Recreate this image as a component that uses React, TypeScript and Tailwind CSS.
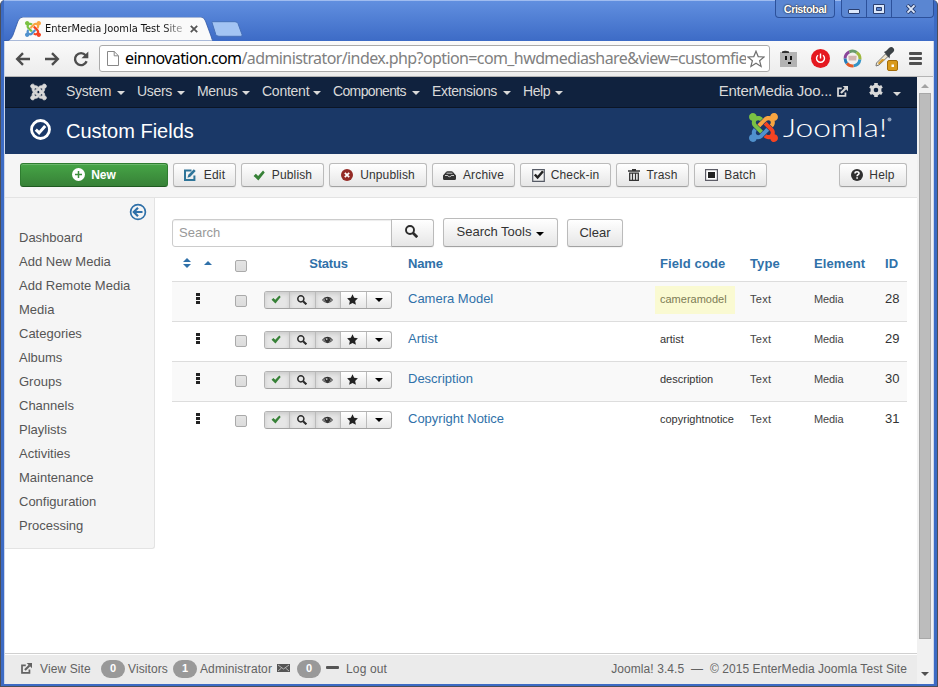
import type { ReactNode } from "react";
import { FaJoomla } from "react-icons/fa";

type Box = { className?: string };

const joomlaPieces = [
  {
    color: "#7ac143",
    d: "M.6 92.1C.6 58.8 27.4 32 60.4 32c30 0 54.5 21.9 59.2 50.2 32.6-7.6 67.1.6 96.5 30l-44.3 44.3c-20.5-20.5-42.6-16.3-55.4-3.5-14.3 14.3-14.3 37.9 0 52.2l99.5 99.5-44 44.3c-87.7-87.2-49.7-49.7-99.8-99.7-26.8-26.5-35-64.8-24.8-98.9C20.4 144.6.6 120.7.6 92.1z",
  },
  {
    color: "#f9a541",
    d: "M130.1 208.5l44.3 44.3c10-10 89.7-89.7 99.7-99.8 14.3-14.3 37.6-14.3 51.9 0 12.8 12.8 17 35-3.5 55.4l44 44.3c31.2-31.2 38.5-67.6 28.9-101.2 29.2-4.1 51.9-29.2 51.9-59.5 0-33.2-26.8-60.1-59.8-60.1-30.3 0-55.4 22.5-59.5 51.6-33.8-9.9-71.7-1.5-98.3 25.1-18.3 19.1-71.1 71.5-99.6 99.9z",
  },
  {
    color: "#f44321",
    d: "M396.4 360.7c8.2-32.7-.9-68.5-26.3-93.9-11.8-12.2 5 4.7-99.5-99.7l-44.3 44.3 99.7 99.7c14.3 14.3 14.3 37.6 0 51.9-12.8 12.8-35 17-55.4-3.5l-44 44.3c27.6 30.2 68 38.8 102.7 28 5.5 27.4 29.7 48.1 58.9 48.1 33 0 59.8-26.8 59.8-60.1 0-30.2-22.5-55-51.6-59.1z",
  },
  {
    color: "#5091cd",
    d: "M312.1 307.6l-44-44.3c-87 86.4-50.4 50.4-99.7 99.8-14.3 14.3-37.6 14.3-51.9 0-13.1-13.4-16.9-35.3 3.2-55.4l-44-44.3c-30.2 30.2-38 65.2-29.5 98.3-26.7 6-46.2 29.9-46.2 58.2C0 453.2 26.8 480 59.8 480c28.6 0 52.5-19.8 58.6-46.7 32.7 8.2 68.5-.6 94.2-26 32.1-32 12.2-12.4 99.5-99.7z",
  },
];

function JoomlaMark({ className }: Box) {
  return (
    <svg viewBox="0 32 448 448" className={className}>
      {joomlaPieces.map((p) => (
        <path key={p.color} d={p.d} fill={p.color} />
      ))}
    </svg>
  );
}

function Caret({ className = "" }: Box) {
  return <span className={`inline-block h-0 w-0 border-x-4 border-t-4 border-x-transparent ${className}`} />;
}

function CheckIcon({ className }: Box) {
  return (
    <svg viewBox="0 0 12 11.500" className={className}>
      <path d="M.3 6.200 2.700 3.800l2.400 2.400L10.200.6l1.800 2L5.300 11z" fill="#378137" />
    </svg>
  );
}

function SearchIcon({ className }: Box) {
  return (
    <svg viewBox="0 0 13 13" className={className} fill="none" stroke="#2b2b2b">
      <circle cx="5" cy="5" r="4" strokeWidth="1.9" />
      <path d="m8 8 4.200 4.200" strokeWidth="2.700" />
    </svg>
  );
}

function OutIcon({ className }: Box) {
  return (
    <svg viewBox="0 0 12 12" className={className} fill="none" stroke="currentColor" strokeWidth="1.9">
      <path d="M5.200 2.600H1.100v8.300H9.200V7" />
      <path d="m4.300 7.600 5-5" strokeWidth="2.300" />
      <path d="M6.200 0h5.800v5.800z" fill="currentColor" stroke="none" />
    </svg>
  );
}

const actionIcons: Record<string, ReactNode> = {
  Edit: (
    <svg viewBox="0 0 12 12" className="mr-[8px] h-3 w-3" fill="none" stroke="#2f7599">
      <path d="M7.500 1.600H1v9.400h9.400V6.500" strokeWidth="2" />
      <path d="M3.500 8.700 4.300 5.800 9.800.3l1.900 1.800L6.300 7.800z" fill="#2f7599" stroke="none" />
    </svg>
  ),
  Publish: <CheckIcon className="mr-[7px] h-[11px] w-[12px]" />,
  Unpublish: (
    <svg viewBox="0 0 12 12" className="mr-[7px] h-3 w-3">
      <circle cx="6" cy="6" r="6" fill="#942a25" />
      <path d="m3.800 3.800 4.400 4.400m0-4.400L3.800 8.200" stroke="#fff" strokeWidth="1.700" />
    </svg>
  ),
  Archive: (
    <svg viewBox="0 0 13 9" className="mr-[7px] h-[9px] w-[13px]">
      <path d="M0 4.500 3 1Q3.600.2 4.500.2h4Q9.400.2 10 1l3 3.500V7.500Q13 9 11.600 9H1.400Q0 9 0 7.500z" fill="#333" />
      <path d="M3.500 2.200h6M2 4.500h2.800q.2 1.200 1.700 1.200t1.700-1.200H11" fill="none" stroke="#ddd" strokeWidth=".9" />
    </svg>
  ),
  "Check-in": (
    <svg viewBox="0 0 13 13" className="mr-[6px] h-[13px] w-[13px]" fill="none">
      <path d="M.7.7h11.600v11.600H.7z" stroke="#565b66" strokeWidth="1.200" />
      <path d="m2.800 5.500 2.800 3L11 2.300" stroke="#222" strokeWidth="2.500" />
    </svg>
  ),
  Trash: (
    <svg viewBox="0 0 12 12" className="mr-[7px] h-3 w-3" fill="none" stroke="#333">
      <path d="M0 2h12M4 .7h4" strokeWidth="1.400" />
      <path d="M1.700 4.200h8.600v7.100H1.700z" strokeWidth="1.300" />
      <path d="M4.500 4v7M7.500 4v7" strokeWidth="1.200" />
    </svg>
  ),
  Batch: (
    <svg viewBox="0 0 13 12" className="mr-[6px] h-3 w-[13px]">
      <path d="M.6.6h11.800v10.800H.6z" fill="#fff" stroke="#5c5c66" strokeWidth="1.200" />
      <path d="M3 3h7v6H3z" fill="#222" />
    </svg>
  ),
  Help: (
    <svg viewBox="0 0 12 12" className="mr-[6px] h-3 w-3" fill="none">
      <circle cx="6" cy="6" r="6" fill="#2f2f2f" />
      <path d="M4 4.400C4 2.200 8.100 2.200 8 4.400 8 5.700 6.100 5.600 6.100 7.200" stroke="#fff" strokeWidth="1.600" />
      <path d="M5.300 8.200h1.600v1.500H5.300z" fill="#fff" />
    </svg>
  ),
};

const button =
  "flex items-center justify-center rounded-[3px] border border-[#bbb] border-b-[#a2a2a2] bg-linear-to-b from-white to-[#e6e6e6] text-[#333] shadow-[0_1px_1px_rgba(0,0,0,0.05)]";

function Action({ label, width }: { label: string; width: string }) {
  return (
    <button className={`${button} h-[24px] shrink-0 text-[12px] ${width}`}>
      {actionIcons[label]}
      <span className="tracking-[0.15px]">{label}</span>
    </button>
  );
}

function TitleBar() {
  return (
    <header className="flex h-[41px] shrink-0 bg-linear-to-b from-[#6290e0] to-[#3d6bc6] shadow-[inset_0_1px_0_#9fbcf0]">
      <div className="relative mt-[17px] flex h-6 w-[209px] shrink-0 items-center pl-[21px]">
        <svg viewBox="0 0 209 24" className="absolute inset-0 h-6 w-[209px]">
          <path d="M0 24C6 24 7 22 9 18L14 4Q15.500 0 19 0H197Q200 0 201.500 4L207 19Q208 23 209 24z" fill="#fafafa" stroke="#3158a6" strokeWidth=".8" />
        </svg>
        <JoomlaMark className="relative h-4 w-4" />
        <span className="relative ml-[4px] w-[138px] overflow-hidden whitespace-nowrap bg-linear-to-r from-[#111] from-85% to-[#bbb] bg-clip-text font-['DejaVu_Sans_Condensed','DejaVu_Sans',sans-serif] text-[11px] font-normal tracking-[-0.01px] text-transparent">
          EnterMedia Joomla Test Site
        </span>
        <svg viewBox="0 0 8 8" className="relative ml-[7px] h-2 w-2" stroke="#555" strokeWidth="1.800">
          <path d="m.8.8 6.400 6.400m0-6.400L.8 7.200" />
        </svg>
      </div>
      <svg viewBox="0 0 32 16" className="ml-[-2px] mt-[21px] h-4 w-8">
        <path d="M1 1.500Q.8.700 2 .700H24Q26 .700 27 2.500L31 13.500Q31.500 15.300 30 15.300H8Q5.500 15.300 4.800 13.500z" fill="#a3c4f3" stroke="#4670b8" />
      </svg>
      <div className="ml-auto flex h-[18px] items-start">
        <div className="mr-[6px] flex h-[18px] w-[60px] items-center justify-center rounded-b-[4px] border border-t-0 border-[#2c519b] bg-[#5a86d2] pt-[2px] font-['Liberation_Sans',Arial,sans-serif] text-[11px] font-bold tracking-[-0.600px] text-white [text-shadow:0_0_2px_#222,0_0_1px_#222]">
          Cristobal
        </div>
        <div className="flex h-[18px] w-[93px] divide-x divide-[#2c519b] rounded-b-[4px] border border-t-0 border-[#2c519b] bg-[#5a86d2]">
          <div className="flex w-[25px] items-center justify-center pt-[5px]">
            <span className="h-[5px] w-3 rounded-[1px] border border-[#2a3f70] bg-[#dce8fb]" />
          </div>
          <div className="flex w-[25px] items-center justify-center">
            <svg viewBox="0 0 12 10" className="h-[10px] w-3">
              <path d="M.5.5h11v9H.5z" fill="#dce8fb" stroke="#2a3f70" />
              <path d="M3.500 3.500h5v3h-5z" fill="#5a86d2" stroke="#2a3f70" />
            </svg>
          </div>
          <div className="flex flex-1 items-center justify-center pr-[3px]">
            <svg viewBox="0 0 12 10" className="h-[10px] w-3" fill="none">
              <path d="m2.200 1 7.600 8m0-8L2.200 9" stroke="#2a3f70" strokeWidth="3.800" />
              <path d="m2.500 1.300 7 7.400m0-7.400-7 7.400" stroke="#dce8fb" strokeWidth="1.900" />
            </svg>
          </div>
        </div>
      </div>
    </header>
  );
}

function BrowserBar() {
  return (
    <div className="flex h-9 shrink-0 items-center border-b border-[#b5b5b5] bg-linear-to-b from-[#fafafa] to-[#ececec]">
      <svg viewBox="0 0 16 14" className="ml-[10px] h-[14px] w-4" fill="none" stroke="#4d4d4d" strokeWidth="2.400">
        <path d="M15 7H2.500M8 1.200 2.200 7 8 12.800" />
      </svg>
      <svg viewBox="0 0 16 14" className="ml-[13px] h-[14px] w-4" fill="none" stroke="#4d4d4d" strokeWidth="2.400">
        <path d="M1 7h12.500M8 1.200 13.800 7 8 12.800" />
      </svg>
      <svg viewBox="0 0 16 16" className="ml-[13px] h-4 w-4" fill="none" stroke="#4d4d4d" strokeWidth="2.400">
        <path d="M12.600 4.200A6 6 0 1 0 13.600 10.300" />
        <path d="M15.300.5v6.800H8.500z" fill="#4d4d4d" stroke="none" />
      </svg>
      <div className="ml-[10px] flex h-[27px] w-[671px] items-center rounded-[3px] border border-[#aaa] bg-white">
        <svg viewBox="0 0 12 15" className="ml-[7px] h-[15px] w-3 shrink-0" fill="#fff" stroke="#888">
          <path d="M.5.5h6.700l4.300 4.300v9.700H.5zM7.200.5v4.300h4.300" />
        </svg>
        <span className="ml-[6px] w-[621px] shrink-0 overflow-hidden whitespace-nowrap pb-px font-['Noto_Sans','Open_Sans',sans-serif] text-[16px] leading-6 tracking-[-0.600px] text-[#808080]">
          <span className="text-black">einnovation.com</span>/administrator/index.php?option=com_hwdmediashare&amp;view=customfie
        </span>
        <svg viewBox="0 0 18 18" className="ml-px h-[18px] w-[18px] shrink-0" fill="#fff" stroke="#707070" strokeWidth="1.200">
          <path d="m9 1.200 2.200 5.400 5.900.4-4.500 3.700 1.500 5.700L9 13.200l-5.100 3.200 1.500-5.700L.9 7l5.900-.4z" />
        </svg>
      </div>
      <svg viewBox="0 0 18 18" className="ml-[10px] h-[18px] w-[18px]">
        <path d="M0 2h17v15H0z" fill="#b3b3b3" />
        <path d="M2 1.500Q5-.2 9 1.500V3H2z" fill="#333" />
        <path d="M5 6h2v4H5zm5 0h2v4h-2zm-2 6h3v2H8z" fill="#111" />
      </svg>
      <svg viewBox="0 0 19 19" className="ml-[13px] h-[19px] w-[19px]" fill="none">
        <circle cx="9.500" cy="9.500" r="9.500" fill="#e51920" />
        <path d="M7 6.200A4 4 0 1 0 12 6.200M9.500 4.500v5" stroke="#fff" strokeWidth="1.400" />
      </svg>
      <svg viewBox="0 0 18 18" className="ml-[13px] h-[19px] w-[19px]" fill="none" strokeWidth="2.800">
        <circle cx="9" cy="9" r="7" fill="#f4f2ef" />
        <path d="M2 9A7 7 0 0 1 6 2.700" stroke="#8a4599" />
        <path d="M6 2.700A7 7 0 0 1 13 3.300" stroke="#6a9a6a" />
        <path d="M13 3.300A7 7 0 0 1 16 10" stroke="#9fb83c" />
        <path d="M16 10A7 7 0 0 1 10 16" stroke="#3494c7" />
        <path d="M10 16A7 7 0 0 1 3.700 13.500" stroke="#e45b28" />
        <path d="M3.700 13.500A7 7 0 0 1 2 9" stroke="#247bb8" />
        <path d="M5 6.500h8l-.5 4.500h-7z" fill="#d2b5b0" />
      </svg>
      <svg viewBox="0 0 24 24" className="ml-[13px] h-6 w-6">
        <path d="m1.500 16 9-9 2.500 2.500-9 8.500-3 1z" fill="#efe6cf" stroke="#777" />
        <path d="m3 16 4-4 3 .5-6 5z" fill="#d69a28" />
        <path d="m9 5 2-1 3-3q2.500-2 4.300 0t0 4L15 8l-.5 3.500z" fill="#3c4246" />
        <rect x="12.500" y="13.500" width="10" height="10" rx="1.500" fill="#d99a1c" stroke="#a36d0b" />
        <path d="M16.500 17.500h2.500V20h-2.500z" fill="#fff" />
      </svg>
      <div className="ml-[10px] flex flex-col gap-[2px]">
        <span className="h-[3px] w-[13px] rounded-[1px] bg-[#505050]" />
        <span className="h-[3px] w-[13px] rounded-[1px] bg-[#505050]" />
        <span className="h-[3px] w-[13px] rounded-[1px] bg-[#505050]" />
      </div>
    </div>
  );
}

const menus = [
  { name: "System", width: "w-[71px]", text: "w-[51px] tracking-[-0.25px]" },
  { name: "Users", width: "w-[60px]", text: "w-[40px] tracking-[-0.3px]" },
  { name: "Menus", width: "w-[65px]", text: "w-[45px] tracking-[-0.3px]" },
  { name: "Content", width: "w-[71px]", text: "w-[51px] tracking-[-0.25px]" },
  { name: "Components", width: "w-[99px]", text: "w-[79px] tracking-[-0.64px]" },
  { name: "Extensions", width: "w-[91px]", text: "w-[71px] tracking-[-0.35px]" },
  { name: "Help", width: "w-[60px]", text: "w-[32px] tracking-[-0.4px]" },
];

function AdminNav() {
  return (
    <nav className="flex h-[31px] shrink-0 items-center border-b border-[#0b1526] bg-[#10223e] pl-[25px] text-[14px] text-[#d9d9d9]">
      <FaJoomla className="mb-px h-[18px] w-[17px] stroke-current stroke-[24px]" />
      <div className="ml-[19px] flex pb-[2px]">
        {menus.map((m) => (
          <div key={m.name} className={`flex items-center ${m.width}`}>
            <span className={`shrink-0 whitespace-nowrap ${m.text}`}>{m.name}</span>
            <Caret className="mt-[4px] border-t-[#d9d9d9]" />
          </div>
        ))}
      </div>
      <div className="ml-auto flex items-center pb-[2px] pr-4">
        <span className="text-[15px] tracking-[-0.25px]">EnterMedia Joo...</span>
        <OutIcon className="ml-[5px] h-[11px] w-[11px]" />
        <svg viewBox="0 0 14 14" className="ml-[21px] h-[14px] w-[14px] -translate-y-px">
          <circle cx="7" cy="7" r="3.900" fill="none" stroke="#d9d9d9" strokeWidth="3.200" />
          <path d="M5.200 0h3.600v3H5.200zm0 11h3.600v3H5.200z" fill="#d9d9d9" />
          <path d="m1 3.400 2.600 1.500M10.400 9.100l2.600 1.500m-12 0 2.600-1.500m6.800-4.200 2.600-1.500" stroke="#d9d9d9" strokeWidth="3.200" />
        </svg>
        <Caret className="ml-[10px] mt-[5px] border-t-[#d9d9d9]" />
      </div>
    </nav>
  );
}

function PageHeading() {
  return (
    <div className="flex h-[46px] shrink-0 items-center bg-[#1a3867] pl-[25px] text-white">
      <svg viewBox="0 0 21 21" className="mb-[4px] h-[21px] w-[21px]" fill="none" stroke="#fff">
        <circle cx="10.500" cy="10.500" r="9" strokeWidth="2.800" />
        <path d="m5.800 10.600 3.300 3.300L15.200 7" strokeWidth="3" />
      </svg>
      <h1 className="ml-[15px] text-[20px]">Custom Fields</h1>
      <div className="ml-auto mr-[24px] flex items-center pb-[7px]">
        <JoomlaMark className="h-[29px] w-[29px]" />
        <svg viewBox="0 0 110 32" className="ml-[5px] h-8 w-[110px]" fill="#fff">
          <text x="0" y="25" textLength="104" lengthAdjust="spacingAndGlyphs" className="font-['Lato',sans-serif] text-[26px] font-light">
            Joomla!
          </text>
          <circle cx="106.500" cy="7.500" r="2" fill="#8fa0bc" />
        </svg>
      </div>
    </div>
  );
}

function Toolbar() {
  return (
    <div className="flex h-11 shrink-0 gap-[5px] border-b border-[#e3e3e3] bg-[#f5f5f5] pl-[15px] pr-[10px] pt-[9px]">
      <button className="flex h-[24px] w-[148px] items-center justify-center rounded-[3px] border border-[#2f7d30] border-b-[#1f5a20] bg-linear-to-b from-[#46a546] to-[#378137] text-[12px] font-bold text-white shadow-[inset_0_1px_0_rgba(255,255,255,0.2)]">
        <svg viewBox="0 0 13 13" className="mb-px mr-[6px] h-[13px] w-[13px]">
          <circle cx="6.500" cy="6.500" r="6.500" fill="#fff" />
          <path d="M6.500 3v7M3 6.500h7" stroke="#3c8f3c" strokeWidth="1.500" />
        </svg>
        New
      </button>
      <Action label="Edit" width="w-[63px]" />
      <Action label="Publish" width="w-[83px]" />
      <Action label="Unpublish" width="w-[98px]" />
      <Action label="Archive" width="w-[83px]" />
      <Action label="Check-in" width="w-[91px]" />
      <Action label="Trash" width="w-[73px]" />
      <Action label="Batch" width="w-[73px]" />
      <div className="ml-auto">
        <Action label="Help" width="w-[68px]" />
      </div>
    </div>
  );
}

const links = [
  "Dashboard",
  "Add New Media",
  "Add Remote Media",
  "Media",
  "Categories",
  "Albums",
  "Groups",
  "Channels",
  "Playlists",
  "Activities",
  "Maintenance",
  "Configuration",
  "Processing",
];

function Sidebar() {
  return (
    <aside className="h-[351px] w-[150px] shrink-0 rounded-br-[3px] border-b border-r border-[#e3e3e3] bg-[#f5f5f5] pt-[5px]">
      <div className="flex justify-end pr-[7px]">
        <svg viewBox="0 0 18 18" className="h-[18px] w-[18px]" fill="none" stroke="#3071a9">
          <circle cx="9" cy="9" r="7.400" strokeWidth="1.700" />
          <path d="M13.500 9H5.500M9 4.800 4.800 9 9 13.200" strokeWidth="2.200" />
        </svg>
      </div>
      <ul className="mt-[5px] pl-[14px] text-[13px] leading-6 text-[#555]">
        {links.map((l) => (
          <li key={l}>{l}</li>
        ))}
      </ul>
    </aside>
  );
}

const grid = "grid grid-cols-[62px_30px_144px_252px_90px_64px_71px_22px]";

function Checkbox({ className = "" }: Box) {
  return <span className={`block h-3 w-3 rounded-[2px] border border-[#aaa] bg-linear-to-b from-[#e4e4e4] to-[#dcdcdc] ${className}`} />;
}

const fields = [
  { id: 28, name: "Camera Model", code: "cameramodel", row: "bg-[#f9f9f9]", tag: "bg-[#fafad2] text-[#7d7c55]" },
  { id: 29, name: "Artist", code: "artist", row: "bg-white", tag: "" },
  { id: 30, name: "Description", code: "description", row: "bg-[#f9f9f9]", tag: "" },
  { id: 31, name: "Copyright Notice", code: "copyrightnotice", row: "bg-white", tag: "" },
];

function StatusGroup() {
  const cell = "flex shrink-0 items-center justify-center";
  const pressed = `${cell} bg-[#e6e6e6] shadow-[inset_0_2px_4px_rgba(0,0,0,0.12)]`;
  return (
    <div className="mt-[9px] flex h-[18px] w-[128px] divide-x divide-[#bbb] overflow-hidden rounded-[3px] border border-[#b3b3b3] border-b-[#a2a2a2] bg-linear-to-b from-white to-[#e6e6e6]">
      <div className={`${pressed} w-[25px] pb-px pr-[2px]`}>
        <CheckIcon className="h-[9px] w-[10px]" />
      </div>
      <div className={`${pressed} w-[26px] pb-px pr-[2px]`}>
        <SearchIcon className="h-[10px] w-[10px]" />
      </div>
      <div className={`${pressed} w-[25px] pb-px pr-px`}>
        <svg viewBox="0 0 12 8" className="h-[8px] w-[11px]">
          <path d="M0 4Q2.500.500 6 .500T12 4Q9.500 7.500 6 7.500T0 4z" fill="#333" />
          <path d="M3.200 2.500Q1.800 3.600 2 4.400q.8 1 1.700 1.400M8.800 2.500q1.400 1.100 1.200 1.900-.8 1-1.700 1.400" fill="none" stroke="#e4e4e4" strokeWidth=".9" />
          <circle cx="5.200" cy="3" r=".9" fill="#e4e4e4" />
        </svg>
      </div>
      <div className={`${cell} w-[26px] pb-px pr-[2px]`}>
        <svg viewBox="0 0 12 12" className="h-[11px] w-[11px]" fill="#222">
          <path d="m6 .3 1.800 3.800 4.100.5-3 2.900.8 4.200L6 9.700l-3.700 2 .8-4.200-3-2.900 4.100-.5z" />
        </svg>
      </div>
      <div className="flex flex-1 items-center justify-center">
        <Caret className="border-t-black" />
      </div>
    </div>
  );
}

function FieldTable() {
  return (
    <div className="w-[735px]">
      <div className={`${grid} h-[34px] pt-[7px] text-[13px] font-bold leading-[20px] tracking-[0.1px] text-[#3071a9]`}>
        <div className="flex items-start pl-[11px] pt-[4px]">
          <svg viewBox="0 0 8 10" className="h-[10px] w-2" fill="#3071a9">
            <path d="m0 4 4-4 4 4zm0 2h8l-4 4z" />
          </svg>
          <svg viewBox="0 0 8 4" className="ml-[13px] mt-[3px] h-1 w-2" fill="#3071a9">
            <path d="m0 4 4-4 4 4z" />
          </svg>
        </div>
        <Checkbox className="ml-px mt-[6px]" />
        <div className="w-[128px] pl-px text-center tracking-[-0.2px]">Status</div>
        <div className="tracking-[-0.15px]">Name</div>
        <div>Field code</div>
        <div>Type</div>
        <div>Element</div>
        <div>ID</div>
      </div>
      {fields.map((f) => (
        <div key={f.id} className={`${grid} h-10 border-t border-[#ddd] ${f.row}`}>
          <div className="flex flex-col gap-px pl-[24px] pt-[11px]">
            <span className="h-[3px] w-1 bg-[#222]" />
            <span className="h-[3px] w-1 bg-[#222]" />
            <span className="h-[3px] w-1 bg-[#222]" />
          </div>
          <Checkbox className="ml-px mt-[13px]" />
          <StatusGroup />
          <div className="pt-[7px] text-[13px] leading-5 text-[#3071a9]">{f.name}</div>
          <div className="pt-[4px] text-[11px] leading-[26px] text-[#333]">
            <span className={`ml-[-5px] block h-7 w-[80px] pl-[5px] ${f.tag}`}>{f.code}</span>
          </div>
          <div className="pt-[7px] text-[11px] leading-5 tracking-[0.3px] text-[#444]">Text</div>
          <div className="pt-[7px] text-[11px] leading-5 tracking-[-0.1px] text-[#444]">Media</div>
          <div className="pt-[7px] text-[13px] leading-5 text-[#333]">{f.id}</div>
        </div>
      ))}
    </div>
  );
}

function Content() {
  return (
    <section className="pl-[17px] pt-5">
      <div className="flex h-[29px] items-end text-[13px]">
        <div className="flex h-7 w-[220px] items-center rounded-l-[3px] border border-[#ccc] pb-px pl-[6px] text-[#999] shadow-[inset_0_1px_1px_rgba(0,0,0,0.075)]">
          Search
        </div>
        <div className={`${button} -ml-px h-7 w-[43px] rounded-l-none pb-[3px] pr-[3px]`}>
          <SearchIcon className="h-[13px] w-[13px]" />
        </div>
        <button className={`${button} ml-[9px] h-[29px] w-[115px] pb-px`}>
          <span>Search Tools</span>
          <Caret className="ml-[5px] mt-[3px] border-t-black" />
        </button>
        <button className={`${button} ml-[9px] h-7 w-14 pb-px`}>Clear</button>
      </div>
      <FieldTable />
    </section>
  );
}

function Badge({ children, className }: { children: ReactNode; className: string }) {
  return (
    <span className={`flex h-[18px] w-6 shrink-0 items-center justify-center rounded-full bg-[#999] text-[11px] font-bold text-white ${className}`}>
      {children}
    </span>
  );
}

function Footer() {
  return (
    <footer className="mt-auto flex h-[31px] shrink-0 items-center border-t border-[#d0d0d0] bg-[#ebebeb] pb-px pl-4 pr-[10px] text-[12px] text-[#626262] shadow-[inset_0_1px_0_#fff]">
      <OutIcon className="mb-px h-[11px] w-[11px]" />
      <span className="ml-[8px] w-[51px] whitespace-nowrap tracking-[0.1px]">View Site</span>
      <Badge className="ml-[10px]">0</Badge>
      <span className="ml-[3px] w-[41px] tracking-[0.1px]">Visitors</span>
      <Badge className="ml-[4px]">1</Badge>
      <span className="ml-[3px] w-[73px] tracking-[0.1px]">Administrator</span>
      <svg viewBox="0 0 13 8" className="mb-[2px] ml-[4px] h-2 w-[13px]">
        <path d="M0 0h13v8H0z" fill="#555" />
        <path d="m1 1 5.500 4L12 1M1 7l3.500-3M12 7 8.500 4" fill="none" stroke="#ccc" strokeWidth=".8" />
      </svg>
      <Badge className="ml-[7px]">0</Badge>
      <span className="mb-[2px] ml-[5px] h-[3px] w-[13px] rounded-[1px] bg-[#555]" />
      <span className="ml-[7px] tracking-[0.15px]">Log out</span>
      <span className="ml-auto whitespace-pre tracking-[0.07px]">Joomla! 3.4.5  —  © 2015 EnterMedia Joomla Test Site</span>
    </footer>
  );
}

function Scrollbar() {
  return (
    <div className="flex w-4 shrink-0 flex-col items-center bg-[#f1f1f1]">
      <span className="mt-[7px] h-0 w-0 border-x-4 border-b-4 border-x-transparent border-b-[#a3a3a3]" />
      <span className="mt-[5px] h-[546px] w-3 border border-[#a8a8a8] bg-[#bcbcbc]" />
      <Caret className="mb-[8px] mt-auto border-t-[#505050]" />
    </div>
  );
}

export default function App() {
  return (
    <div className="h-[687px] w-[938px] overflow-hidden rounded-t-[5px] border-x border-b border-[#4c4f58] bg-[#3c6bc4] font-['Liberation_Sans',Arial,sans-serif]">
      <div className="flex h-[684px] flex-col px-[3px]">
        <TitleBar />
        <div className="flex min-h-0 flex-1 flex-col border-x border-[#cbd6ea]">
          <BrowserBar />
          <div className="flex min-h-0 flex-1">
            <main className="flex min-w-0 flex-1 flex-col bg-white">
              <AdminNav />
              <PageHeading />
              <Toolbar />
              <div className="flex">
                <Sidebar />
                <Content />
              </div>
              <Footer />
            </main>
            <Scrollbar />
          </div>
        </div>
      </div>
    </div>
  );
}
